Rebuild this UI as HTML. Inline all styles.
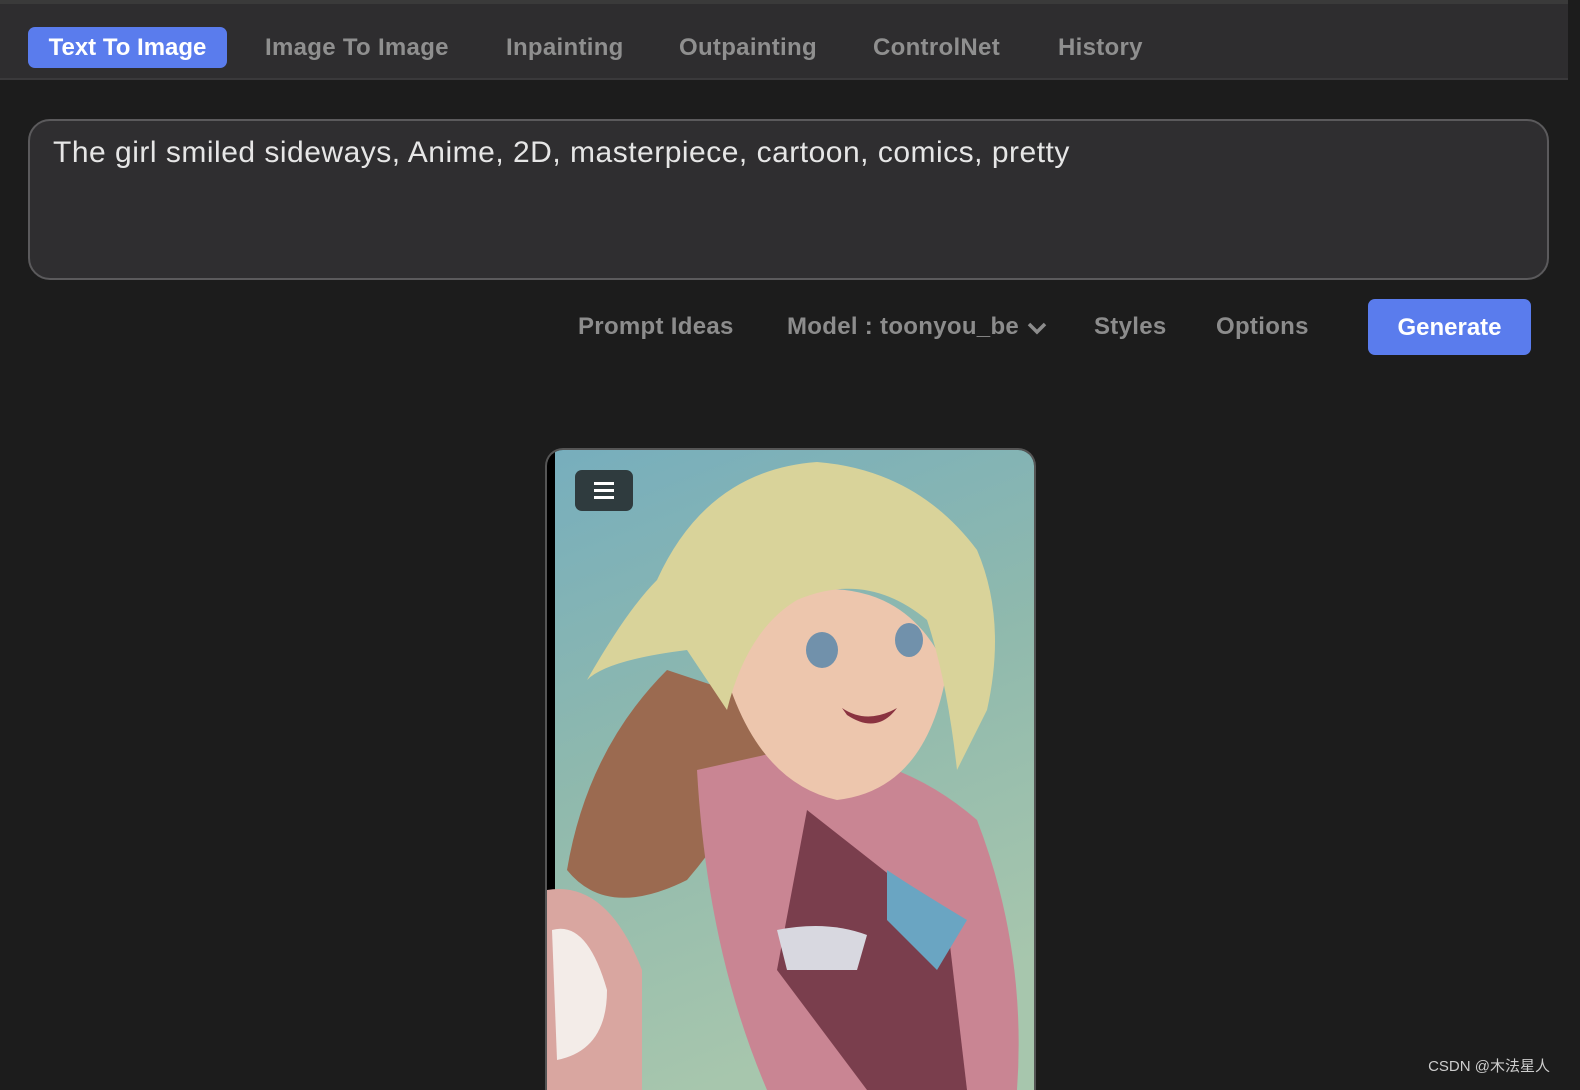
<!DOCTYPE html>
<html><head><meta charset="utf-8"><style>
body{margin:0;width:1580px;height:1080px;background:#1c1c1c;overflow:hidden;font-family:"Liberation Sans",sans-serif;position:relative}
.top{position:absolute;left:0;top:0;width:1568px;height:80px;background:#2e2d2f;border-top:4px solid #3a3a3a;border-bottom:2px solid #3a393b;box-sizing:border-box}
.tab{position:absolute;top:44px;transform:translateY(-50%);font-size:24px;color:#8f8f8f;font-weight:bold;letter-spacing:0.3px}
.act{left:28px;top:23px;transform:none;height:41px;width:199px;background:#5a7ced;color:#fff;border-radius:7px;line-height:41px;text-align:center;letter-spacing:0}
.ta{position:absolute;left:28px;top:119px;width:1521px;height:161px;box-sizing:border-box;border:2px solid #5b5a5c;border-radius:22px;background:#2f2e30;color:#e6e6e6;font-size:30px;padding:15px 23px;letter-spacing:0.5px}
.bt{position:absolute;top:327px;transform:translateY(-50%);color:#8c8c8c;font-size:24px;font-weight:bold;letter-spacing:0.3px}
.gen{position:absolute;left:1368px;top:299px;width:163px;height:56px;background:#5a7ced;border-radius:7px;color:#fff;font-size:24px;font-weight:bold;text-align:center;line-height:57px}
.card{position:absolute;left:545px;top:448px;width:487px;height:640px;border:2px solid #555;border-bottom:none;border-radius:18px 18px 0 0;overflow:hidden;background:#000}
.menu{position:absolute;left:575px;top:470px;width:58px;height:41px;background:#2f3b3e;border-radius:7px}
.menu i{position:absolute;left:19px;width:20px;height:3px;background:#fff}
.wm{position:absolute;right:30px;bottom:4px;color:#ccc;font-size:15px;font-family:"Liberation Sans","Noto Sans CJK SC",sans-serif}
</style></head><body>
<div class="top">
<div class="tab act">Text To Image</div>
<div class="tab" style="left:265px">Image To Image</div>
<div class="tab" style="left:506px">Inpainting</div>
<div class="tab" style="left:679px">Outpainting</div>
<div class="tab" style="left:873px">ControlNet</div>
<div class="tab" style="left:1058px">History</div>
</div>
<div class="ta">The girl smiled sideways, Anime, 2D, masterpiece, cartoon, comics, pretty</div>
<div class="bt" style="left:578px">Prompt Ideas</div>
<div class="bt" style="left:787px">Model : toonyou_be <svg width="22" height="14" viewBox="0 0 22 14" style="vertical-align:middle"><path d="M3 3l8 8 8-8" stroke="#8c8c8c" stroke-width="3.5" fill="none"/></svg></div>
<div class="bt" style="left:1094px">Styles</div>
<div class="bt" style="left:1216px">Options</div>
<div class="gen">Generate</div>
<div class="card">
<svg width="487" height="640" viewBox="0 0 487 640">
<defs><linearGradient id="bg" x1="0" y1="0" x2="0.3" y2="1"><stop offset="0" stop-color="#77aebd"/><stop offset="0.5" stop-color="#8fb9ad"/><stop offset="1" stop-color="#a7c6ad"/></linearGradient></defs>
<rect x="8" y="0" width="487" height="640" fill="url(#bg)"/>
<path d="M0 440 Q60 430 95 520 L95 640 L0 640Z" fill="#d9a6a0"/>
<path d="M5 480 Q40 470 60 540 Q60 600 10 610Z" fill="#f3ece8"/>
<path d="M120 220 Q40 300 20 420 Q60 470 140 430 Q200 360 240 260Z" fill="#9b6a50"/>
<path d="M150 320 Q160 500 220 640 L470 640 Q480 500 430 370 Q350 300 240 300Z" fill="#c98593"/>
<path d="M260 360 L230 520 L320 640 L420 640 L400 470Z" fill="#7a3e4d"/>
<path d="M170 190 Q200 330 290 350 Q380 340 400 220 Q360 130 260 140 Q190 150 170 190Z" fill="#edc6ad"/>
<path d="M110 130 Q160 20 270 12 Q370 20 430 100 Q460 170 440 260 Q420 300 410 320 Q400 230 380 170 Q320 120 250 150 Q200 180 180 260 Q160 230 140 200 Q60 210 40 230 Q80 160 110 130Z" fill="#d9d39a"/>
<ellipse cx="275" cy="200" rx="16" ry="18" fill="#7191ab"/>
<ellipse cx="362" cy="190" rx="14" ry="17" fill="#7191ab"/>
<path d="M295 258 Q320 275 350 258 Q330 285 300 265Z" fill="#8a3340"/>
<path d="M340 420 Q370 440 420 470 L390 520 L340 470Z" fill="#6aa5c2"/>
<path d="M230 480 Q280 470 320 485 L310 520 L240 520Z" fill="#d8d8e0"/>
</svg>
</div>
<div class="menu"><i style="top:12px"></i><i style="top:19px"></i><i style="top:26px"></i></div>
<div class="wm">CSDN @木法星人</div>
</body></html>
